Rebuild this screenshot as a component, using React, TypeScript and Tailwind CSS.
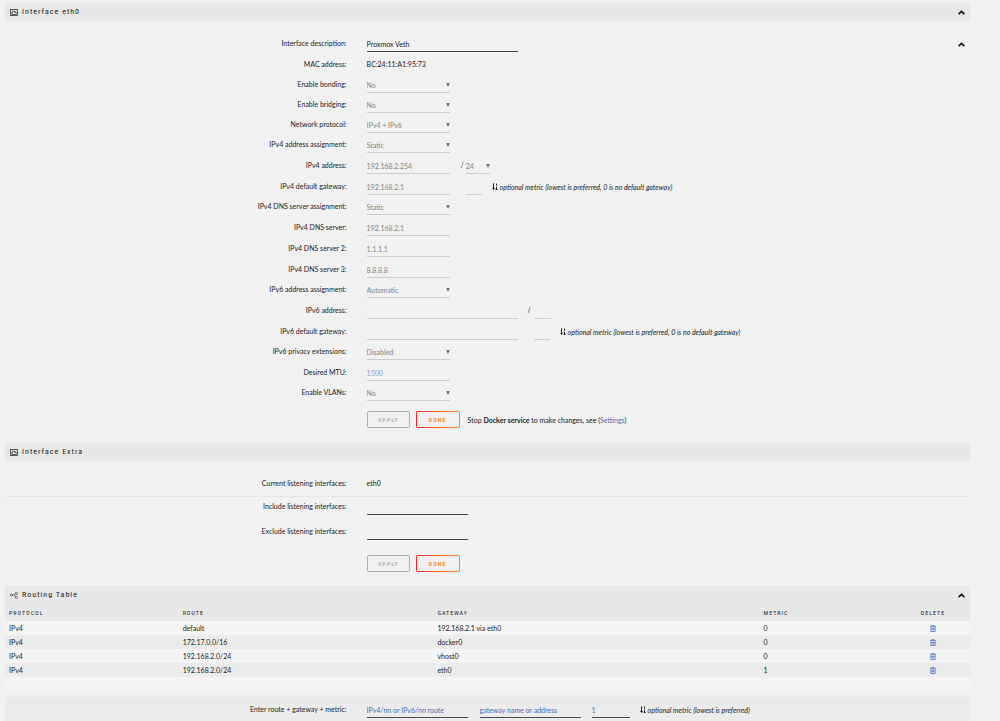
import type { ReactNode } from "react"
import clsx from "clsx"

const routes = [
  { protocol: "IPv4", route: "default", gateway: "192.168.2.1 via eth0", metric: 0 },
  { protocol: "IPv4", route: "172.17.0.0/16", gateway: "docker0", metric: 0 },
  { protocol: "IPv4", route: "192.168.2.0/24", gateway: "vhost0", metric: 0 },
  { protocol: "IPv4", route: "192.168.2.0/24", gateway: "eth0", metric: 1 },
]

/* Icons */

function PortIcon() {
  return (
    <svg viewBox="0 0 16 14" className="w-2 h-[7px]" fill="none" stroke="#333" strokeWidth="1.6" aria-hidden="true">
      <rect x="1" y="1" width="14" height="12" />
      <path d="M3.500 9.500V7h2V4.500h5V7h2v2.500M3 10.800h10" />
    </svg>
  )
}

function RouteIcon() {
  return (
    <svg viewBox="0 0 16 14" className="w-2 h-[7px]" fill="none" stroke="#444" strokeWidth="1.4" aria-hidden="true">
      <circle cx="3" cy="6" r="2.200" />
      <circle cx="12.800" cy="2.800" r="2.200" />
      <circle cx="12.800" cy="11" r="2.200" />
      <path d="M5.200 6h3.300l2.500-2.200M8.500 6l2.500 3.500" />
    </svg>
  )
}

function SortIcon() {
  return (
    <svg viewBox="0 0 12 14" className="w-[6px] h-[7px] shrink-0" fill="none" stroke="#222" strokeWidth="2" aria-hidden="true">
      <path d="M3 0.500v12M0.600 10.500L3 12.800 5.400 10.500M9 1v4.500M9 7.500v5M7 12.800h4.500" />
    </svg>
  )
}

function TrashIcon() {
  return (
    <svg viewBox="0 0 12 14" className="w-[6px] h-[7px]" fill="none" stroke="#486dba" strokeWidth="1.5" aria-hidden="true">
      <path d="M0.500 2.800h11M4 2.500V0.800h4v1.700M1.700 3v10h8.600V3M4.200 5.500v5M6 5.500v5M7.800 5.500v5" />
    </svg>
  )
}

function ChevronButton({ label }: { label: string }) {
  return (
    <button type="button" aria-label={label} className="flex items-center">
      <svg viewBox="0 0 14 9" className="w-[7px] h-[5px]" fill="none" stroke="#111" strokeWidth="3.200" aria-hidden="true">
        <path d="M1.200 7.800L7 2.400l5.800 5.400" />
      </svg>
    </button>
  )
}

/* Layout pieces */

function TitleBar({ icon, title, children }: { icon: ReactNode; title: string; children?: ReactNode }) {
  return (
    <div className="flex items-center justify-between h-[18px] px-[5px] bg-[#e7e7e7]">
      <h2 className="flex items-center gap-1 font-['Roboto_Condensed',Roboto,sans-serif] text-[8px] tracking-[1px]">
        {icon}
        {title}
      </h2>
      {children}
    </div>
  )
}

type RowProps = { label: string; htmlFor?: string; size?: "short" | "tall"; children: ReactNode }

function Row({ label, htmlFor, size = "short", children }: RowProps) {
  return (
    <div className={clsx("grid grid-cols-[35.4%_1fr] gap-x-5 items-end", size === "tall" ? "h-[21px]" : "h-5")}>
      {htmlFor ? (
        <label htmlFor={htmlFor} className="h-4 leading-[14px] text-right">{label}</label>
      ) : (
        <span className="h-4 leading-[14px] text-right">{label}</span>
      )}
      <div className="flex items-end h-4">{children}</div>
    </div>
  )
}

type SelectProps = { id?: string; value: string; label?: string; className?: string }

function Select({ id, value, label, className = "w-[83px]" }: SelectProps) {
  return (
    <span className={clsx("flex items-center h-4 border-b border-[#cdcdcd]", className)}>
      <select id={id} aria-label={label} defaultValue={value} disabled className="flex-1 min-w-0 appearance-none bg-transparent text-[#858585] disabled:opacity-100">
        <option>{value}</option>
      </select>
      <svg viewBox="0 0 8 8" className="w-1 h-1 shrink-0 pointer-events-none" fill="#555" aria-hidden="true">
        <path d="M0.500 0.500h7L4 7.500z" />
      </svg>
    </span>
  )
}

type FieldProps = { id?: string; value?: string; label?: string; placeholder?: string; className?: string }

function LockedField({ id, value, label, placeholder, className = "w-[83px]" }: FieldProps) {
  return (
    <input
      id={id}
      type="text"
      aria-label={label}
      defaultValue={value}
      placeholder={placeholder}
      disabled
      className={clsx("h-4 border-b border-[#cdcdcd] bg-transparent text-[#858585] placeholder:text-[#8fa6da]", className)}
    />
  )
}

function Field({ id, value, label, placeholder, className = "w-[101px]" }: FieldProps) {
  return (
    <input
      id={id}
      type="text"
      aria-label={label}
      defaultValue={value}
      placeholder={placeholder}
      className={clsx("h-4 border-b border-[#4a4a4a] bg-transparent text-[#1c1b1b] placeholder:text-[#486dba] outline-none", className)}
    />
  )
}

function MetricHint({ text, className }: { text: string; className?: string }) {
  return (
    <span className={clsx("flex items-center gap-[2px] h-4 pb-px whitespace-nowrap", className)}>
      <SortIcon />
      <i>{text}</i>
    </span>
  )
}

function FormButtons({ children }: { children?: ReactNode }) {
  return (
    <div className="grid grid-cols-[35.4%_1fr] gap-x-5">
      <div className="col-start-2 flex items-center gap-[6px]">
        <button type="button" disabled className="w-[43px] h-[17px] rounded-[2px] border border-[#b0b0b0] font-['Roboto_Condensed',Roboto,sans-serif] text-[6px] font-bold tracking-[1px] text-[#b3b3b3]">
          APPLY
        </button>
        <button type="button" className="w-11 h-[17px] rounded-[2px] p-px bg-linear-to-r from-[#e22828] to-[#ff8c2f] font-['Roboto_Condensed',Roboto,sans-serif] text-[6px] font-bold tracking-[1px] text-[#ff8c2f]">
          <span className="flex items-center justify-center h-full rounded-[1px] bg-[#f1f1f1]">DONE</span>
        </button>
        {children}
      </div>
    </div>
  )
}

export default function App() {
  return (
    <main className="min-h-screen pt-[3px] pl-[5px] pr-[30px] bg-[#f1f1f1] font-[Lato,sans-serif] text-[7px] leading-[14px] text-[#1c1b1b]">
      {/* Interface eth0 */}
      <section>
        <TitleBar icon={<PortIcon />} title="Interface eth0">
          <ChevronButton label="Collapse interface eth0" />
        </TitleBar>
        <form className="pt-[11px]">
          <Row label="Interface description:" htmlFor="description">
            <Field id="description" value="Proxmox Veth" className="w-[151px]" />
            <span className="flex items-center h-4 ml-auto pr-[5px]">
              <ChevronButton label="Collapse settings" />
            </span>
          </Row>
          <Row label="MAC address:" size="tall">
            <span className="h-4">BC:24:11:A1:95:73</span>
          </Row>
          <Row label="Enable bonding:" htmlFor="bonding">
            <Select id="bonding" value="No" />
          </Row>
          <Row label="Enable bridging:" htmlFor="bridging">
            <Select id="bridging" value="No" />
          </Row>
          <Row label="Network protocol:" htmlFor="protocol">
            <Select id="protocol" value="IPv4 + IPv6" />
          </Row>
          <Row label="IPv4 address assignment:" htmlFor="v4-assign">
            <Select id="v4-assign" value="Static" />
          </Row>
          <Row label="IPv4 address:" htmlFor="v4-address" size="tall">
            <LockedField id="v4-address" value="192.168.2.254" />
            <span className="h-4 ml-[11px] mr-[2px]">/</span>
            <Select label="IPv4 prefix length" value="24" className="w-6" />
          </Row>
          <Row label="IPv4 default gateway:" htmlFor="v4-gateway" size="tall">
            <LockedField id="v4-gateway" value="192.168.2.1" />
            <LockedField label="IPv4 metric" className="w-4 ml-4" />
            <MetricHint text="optional metric (lowest is preferred, 0 is no default gateway)" className="ml-[10px]" />
          </Row>
          <Row label="IPv4 DNS server assignment:" htmlFor="v4-dns-assign">
            <Select id="v4-dns-assign" value="Static" />
          </Row>
          <Row label="IPv4 DNS server:" htmlFor="dns1" size="tall">
            <LockedField id="dns1" value="192.168.2.1" />
          </Row>
          <Row label="IPv4 DNS server 2:" htmlFor="dns2" size="tall">
            <LockedField id="dns2" value="1.1.1.1" />
          </Row>
          <Row label="IPv4 DNS server 3:" htmlFor="dns3" size="tall">
            <LockedField id="dns3" value="8.8.8.8" />
          </Row>
          <Row label="IPv6 address assignment:" htmlFor="v6-assign">
            <Select id="v6-assign" value="Automatic" />
          </Row>
          <Row label="IPv6 address:" htmlFor="v6-address" size="tall">
            <LockedField id="v6-address" className="w-[151px]" />
            <span className="h-4 ml-[10px] mr-1">/</span>
            <LockedField label="IPv6 prefix length" className="w-4" />
          </Row>
          <Row label="IPv6 default gateway:" htmlFor="v6-gateway" size="tall">
            <LockedField id="v6-gateway" className="w-[151px]" />
            <LockedField label="IPv6 metric" className="w-4 ml-4" />
            <MetricHint text="optional metric (lowest is preferred, 0 is no default gateway)" className="ml-[10px]" />
          </Row>
          <Row label="IPv6 privacy extensions:" htmlFor="privacy">
            <Select id="privacy" value="Disabled" />
          </Row>
          <Row label="Desired MTU:" htmlFor="mtu" size="tall">
            <LockedField id="mtu" placeholder="1500" />
          </Row>
          <Row label="Enable VLANs:" htmlFor="vlans">
            <Select id="vlans" value="No" />
          </Row>
          <div className="py-[10px]">
            <FormButtons>
              <p className="ml-[2px]">
                Stop <b>Docker service</b> to make changes, see (<a href="#settings" className="text-[#486dba]">Settings</a>)
              </p>
            </FormButtons>
          </div>
        </form>
      </section>

      {/* Interface Extra */}
      <section className="mt-[5px]">
        <TitleBar icon={<PortIcon />} title="Interface Extra" />
        <form className="pt-[10px]">
          <div className="pb-1 border-b border-[#e6e6e6]">
            <Row label="Current listening interfaces:" size="tall">
              <span className="h-4">eth0</span>
            </Row>
          </div>
          <div className="flex flex-col gap-1 -mt-[2px]">
            <Row label="Include listening interfaces:" htmlFor="include">
              <Field id="include" />
            </Row>
            <Row label="Exclude listening interfaces:" htmlFor="exclude" size="tall">
              <Field id="exclude" />
            </Row>
          </div>
          <div className="pt-[15px]">
            <FormButtons />
          </div>
        </form>
      </section>

      {/* Routing Table */}
      <section className="mt-[14px]">
        <TitleBar icon={<RouteIcon />} title="Routing Table">
          <ChevronButton label="Collapse routing table" />
        </TitleBar>
        <table className="w-full table-fixed border-collapse text-left">
          <thead>
            <tr className="h-[17px] bg-[#e7e7e7] font-['Roboto_Condensed',Roboto,sans-serif] text-[6px] tracking-[1px]">
              <th className="w-[18%] px-1 font-normal">PROTOCOL</th>
              <th className="w-[26.4%] px-1 font-normal">ROUTE</th>
              <th className="w-[33.8%] px-1 font-normal">GATEWAY</th>
              <th className="px-1 font-normal">METRIC</th>
              <th className="w-[74px] px-1 font-normal text-center">DELETE</th>
            </tr>
          </thead>
          <tbody>
            {routes.map((r) => (
              <tr key={r.gateway} className="h-[14px] odd:bg-[#f4f4f4] even:bg-[#ebebeb]">
                <td className="px-1">{r.protocol}</td>
                <td className="px-1">{r.route}</td>
                <td className="px-1">{r.gateway}</td>
                <td className="px-1">{r.metric}</td>
                <td className="px-1">
                  <a href="#delete" aria-label={`Delete route to ${r.gateway}`} className="flex justify-center">
                    <TrashIcon />
                  </a>
                </td>
              </tr>
            ))}
            <tr className="h-[15px] bg-[#f4f4f4]">
              <td colSpan={5} />
            </tr>
          </tbody>
        </table>
        <form className="mt-[5px] pb-1 bg-[#ebebeb]">
          <Row label="Enter route + gateway + metric:" htmlFor="new-route" size="tall">
            <Field id="new-route" placeholder="IPv4/nn or IPv6/nn route" />
            <Field label="Gateway" placeholder="gateway name or address" className="w-[101px] ml-3" />
            <Field label="Metric" placeholder="1" className="w-[38px] ml-[11px]" />
            <MetricHint text="optional metric (lowest is preferred)" className="ml-[10px]" />
          </Row>
        </form>
      </section>
    </main>
  )
}
